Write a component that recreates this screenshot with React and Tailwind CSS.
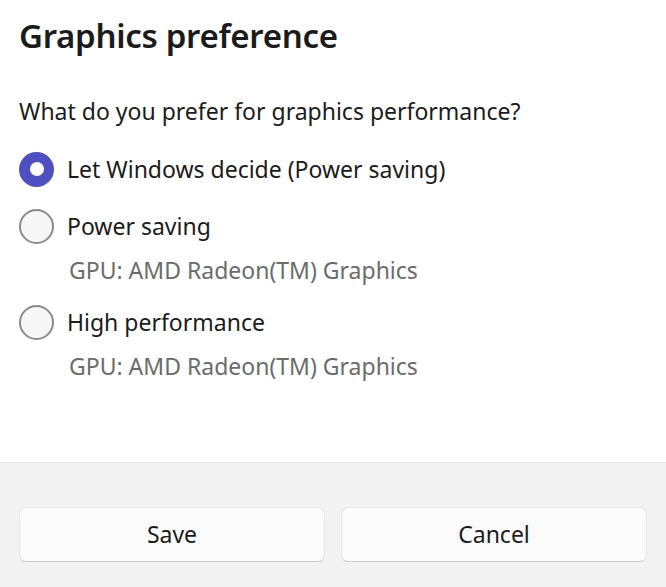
import React, { useState } from 'react';

const OPTIONS = [
    { id: 'auto', label: 'Let Windows decide (Power saving)' },
    { id: 'save', label: 'Power saving', gpu: 'GPU: AMD Radeon(TM) Graphics' },
    { id: 'high', label: 'High performance', gpu: 'GPU: AMD Radeon(TM) Graphics' },
];

function Radio({ checked }) {
    if (checked) {
        return <span className="w-[35px] h-[35px] rounded-full bg-[#4f4fc4] flex items-center justify-center shrink-0">
            <span className="w-[14px] h-[14px] rounded-full bg-white" />
        </span>;
    }
    return <span className="w-[35px] h-[35px] rounded-full border-2 border-[#8b8b8b] bg-[#f7f7f7] shrink-0" />;
}

export default function App() {
    const [choice, setChoice] = useState('auto');

    return (
        <div className="w-[666px] h-[587px] bg-white flex flex-col text-[#1b1b1b] overflow-hidden" style={{ fontFamily: '"Noto Sans", "Open Sans", sans-serif' }}>
            <div className="h-[462px] px-[19px] pt-[13px]">
                <h1 className="text-[33px] leading-[46px] font-semibold tracking-[-0.3px]">Graphics preference</h1>
                <p className="mt-[35px] text-[23px] leading-[34px]">What do you prefer for graphics performance?</p>
                <div className="mt-[17px]">
                    {OPTIONS.map(o => (
                        <div key={o.id} className={o.gpu ? 'mb-[11px]' : 'mb-[9px]'}>
                            <button onClick={() => setChoice(o.id)} className="flex items-center gap-[13px] h-[48px]">
                                <Radio checked={choice === o.id} />
                                <span className="text-[23px] leading-[34px]">{o.label}</span>
                            </button>
                            {o.gpu && <div className="pl-[50px] text-[23px] leading-[34px] text-[#6b6b6b] mt-[3px]">{o.gpu}</div>}
                        </div>
                    ))}
                </div>
            </div>
            <div className="flex-1 bg-[#f3f3f3] border-t border-[#e3e3e3] px-[19px] pt-[44px]">
                <div className="grid grid-cols-2 gap-[16px]">
                    <button className="h-[55px] rounded-[7px] bg-[#fbfbfb] border border-[#e5e5e5] border-b-[#cccccc] text-[23px]">Save</button>
                    <button className="h-[55px] rounded-[7px] bg-[#fbfbfb] border border-[#e5e5e5] border-b-[#cccccc] text-[23px]">Cancel</button>
                </div>
            </div>
        </div>
    );
}
